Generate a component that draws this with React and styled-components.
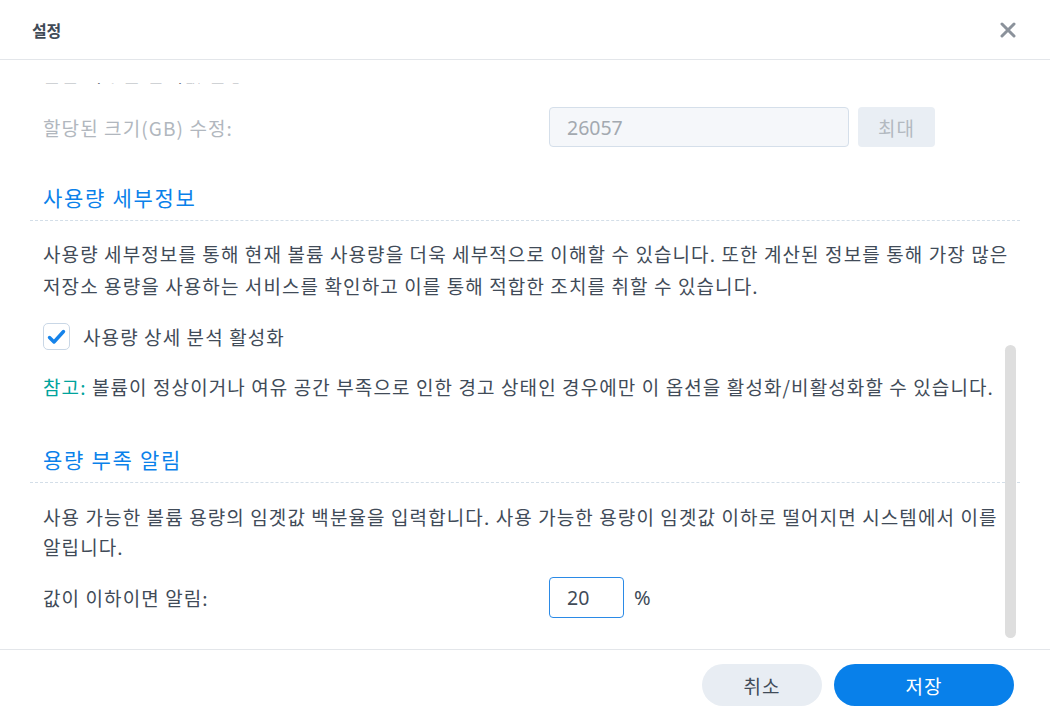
import styled, { createGlobalStyle } from 'styled-components';

const GlobalStyle = createGlobalStyle`
    html, body {
        margin: 0;
        padding: 0;
        background: #ffffff;
    }
    body {
        font-family: "Noto Sans CJK KR", "Noto Sans", sans-serif;
        color: #414b58;
    }
`

const Dialog = styled.div`
    width: 1050px;
    height: 720px;
    display: flex;
    flex-direction: column;
    background: #ffffff;
    overflow: hidden;
`

const Header = styled.div`
    height: 59px;
    flex-shrink: 0;
    display: flex;
    align-items: center;
    justify-content: space-between;
    padding: 0 34px 0 32px;
    border-bottom: 1px solid #e3e6ea;
`

const Title = styled.div`
    font-size: 16px;
    font-weight: 700;
    letter-spacing: -0.3px;
    color: #404a56;
`

const CloseButton = styled.button`
    border: none;
    background: none;
    padding: 0;
    width: 16px;
    height: 16px;
    display: flex;
    cursor: pointer;
`

const Body = styled.div`
    flex: 1;
    padding-top: 23px;
    position: relative;
    display: flex;
    flex-direction: column;
`

const Viewport = styled.div`
    flex: 1;
    overflow: hidden;
`

const Content = styled.div`
    margin-top: -25px;
    padding: 0 30px;
`

const Thumb = styled.div`
    position: absolute;
    left: 1005px;
    top: 285px;
    width: 11px;
    height: 293px;
    border-radius: 6px;
    background: #dedede;
`

const Text = styled.div`
    font-size: 19px;
    letter-spacing: 1.1px;
    line-height: ${p => p.$lh || 32}px;
    padding-left: 13px;
    margin-top: ${p => p.$top || 0}px;
    color: ${p => p.$muted ? '#b1b7be' : '#414b58'};
`

const Row = styled.div`
    display: flex;
    align-items: center;
    padding-left: 13px;
    margin-top: ${p => p.$top || 0}px;
`

const RowLabel = styled.div`
    width: 506px;
    font-size: 19px;
    letter-spacing: 1.1px;
    color: ${p => p.$muted ? '#b1b7be' : '#414b58'};
`

const Field = styled.div`
    box-sizing: border-box;
    width: ${p => p.$width}px;
    height: ${p => p.$height || 40}px;
    display: flex;
    align-items: center;
    padding-left: 17px;
    border-radius: 4px;
    font-family: "Noto Sans", sans-serif;
    font-size: 19.5px;
    border: 1px solid ${p => p.$focus ? '#2b8ae6' : '#d5dfea'};
    background: ${p => p.$disabled ? '#f5f7fa' : '#ffffff'};
    color: ${p => p.$disabled ? '#a3a9b0' : '#414b58'};
`

const SideButton = styled.div`
    width: 77px;
    height: 40px;
    margin-left: 9px;
    border-radius: 4px;
    background: #e9eef4;
    color: #b3b9c0;
    font-size: 19px;
    letter-spacing: 1px;
    display: flex;
    align-items: center;
    justify-content: center;
`

const Unit = styled.div`
    margin-left: 10px;
    font-family: "Noto Sans", sans-serif;
    font-size: 20px;
    color: #414b58;
`

const Section = styled.div`
    margin-top: ${p => p.$top}px;
`

const Heading = styled.div`
    font-size: 21px;
    letter-spacing: 1.7px;
    line-height: 30px;
    color: #0a81ea;
    padding: 0 0 8px 13px;
    border-bottom: 1px dashed #d3dee8;
    margin-bottom: ${p => p.$gap}px;
`

const Check = styled.div`
    box-sizing: border-box;
    width: 27px;
    height: 27px;
    border: 1px solid #c9d7e6;
    border-radius: 5px;
    background: #ffffff;
    display: flex;
    align-items: center;
    justify-content: center;
    margin-right: 13px;
`

const CheckLabel = styled.div`
    font-size: 19px;
    letter-spacing: 1.1px;
    color: #414b58;
`

const NoteKey = styled.span`
    color: #00a39c;
`

const Footer = styled.div`
    height: 70px;
    flex-shrink: 0;
    border-top: 1px solid #e3e6ea;
    display: flex;
    align-items: center;
    justify-content: flex-end;
    gap: 12px;
    padding-right: 36px;
`

const Button = styled.button`
    height: 42px;
    width: ${p => p.$width}px;
    border: none;
    border-radius: 21px;
    font-family: "Noto Sans CJK KR", sans-serif;
    font-size: 19px;
    letter-spacing: 1px;
    background: ${p => p.$primary ? '#0880ea' : '#e8edf3'};
    color: ${p => p.$primary ? '#ffffff' : '#414b58'};
    cursor: pointer;
`

const App = () => {
    return (
        <>
            <GlobalStyle />
            <Dialog>
                <Header>
                    <Title>설정</Title>
                    <CloseButton aria-label="닫기">
                        <svg width="16" height="16" viewBox="0 0 16 16">
                            <path d="M2 2 L14 14 M14 2 L2 14" stroke="#8b929b" strokeWidth="3" strokeLinecap="round" />
                        </svg>
                    </CloseButton>
                </Header>
                <Body>
                    <Viewport>
                        <Content>
                            <Text>볼륨 사용률 임계값 설정</Text>
                            <Row $top={17}>
                                <RowLabel $muted>할당된 크기(GB) 수정:</RowLabel>
                                <Field $width={300} $disabled>26057</Field>
                                <SideButton>최대</SideButton>
                            </Row>

                            <Section $top={35}>
                                <Heading $gap={17}>사용량 세부정보</Heading>
                                <Text>
                                    사용량 세부정보를 통해 현재 볼륨 사용량을 더욱 세부적으로 이해할 수 있습니다. 또한 계산된 정보를 통해 가장 많은 저장소 용량을 사용하는 서비스를 확인하고 이를 통해 적합한 조치를 취할 수 있습니다.
                                </Text>
                                <Row $top={21}>
                                    <Check>
                                        <svg width="19" height="16" viewBox="0 0 19 16">
                                            <path d="M2.5 8.5 L7 13 L16.5 2.5" fill="none" stroke="#1583ea" strokeWidth="3.4" strokeLinecap="round" strokeLinejoin="round" />
                                        </svg>
                                    </Check>
                                    <CheckLabel>사용량 상세 분석 활성화</CheckLabel>
                                </Row>
                                <Text $top={21}>
                                    <NoteKey>참고:</NoteKey> 볼륨이 정상이거나 여유 공간 부족으로 인한 경고 상태인 경우에만 이 옵션을 활성화/비활성화할 수 있습니다.
                                </Text>
                            </Section>

                            <Section $top={41}>
                                <Heading $gap={19}>용량 부족 알림</Heading>
                                <Text $lh={30}>
                                    사용 가능한 볼륨 용량의 임곗값 백분율을 입력합니다. 사용 가능한 용량이 임곗값 이하로 떨어지면 시스템에서 이를 알립니다.
                                </Text>
                                <Row $top={15}>
                                    <RowLabel>값이 이하이면 알림:</RowLabel>
                                    <Field $width={75} $height={41} $focus>20</Field>
                                    <Unit>%</Unit>
                                </Row>
                            </Section>
                        </Content>
                    </Viewport>
                    <Thumb />
                </Body>
                <Footer>
                    <Button $width={120}>취소</Button>
                    <Button $width={180} $primary>저장</Button>
                </Footer>
            </Dialog>
        </>
    );
}

export default App;
